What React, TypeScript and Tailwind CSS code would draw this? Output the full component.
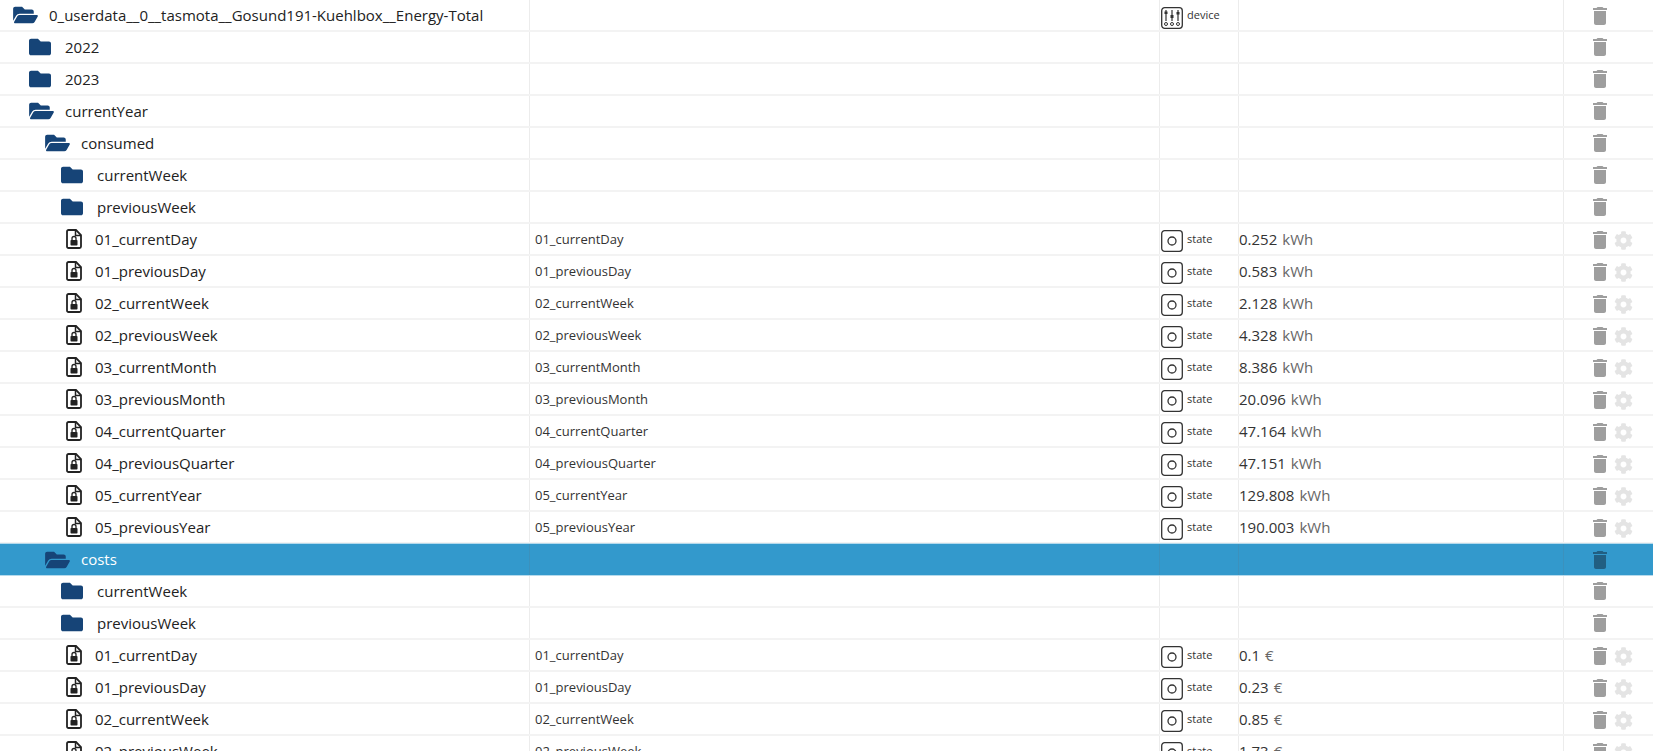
import { FaFolder, FaFolderOpen, FaCog } from 'react-icons/fa';
import { MdDelete } from 'react-icons/md';

type Row = {
	name: string;
	level: number;
	kind: 'open' | 'closed' | 'state';
	type?: 'device' | 'state';
	value?: string;
	unit?: string;
	selected?: boolean;
};

const st = (name: string, value: string, unit: string): Row => ({ name, level: 3, kind: 'state', type: 'state', value, unit });

const rows: Row[] = [
	{ name: '0_userdata__0__tasmota__Gosund191-Kuehlbox__Energy-Total', level: 0, kind: 'open', type: 'device' },
	{ name: '2022', level: 1, kind: 'closed' },
	{ name: '2023', level: 1, kind: 'closed' },
	{ name: 'currentYear', level: 1, kind: 'open' },
	{ name: 'consumed', level: 2, kind: 'open' },
	{ name: 'currentWeek', level: 3, kind: 'closed' },
	{ name: 'previousWeek', level: 3, kind: 'closed' },
	st('01_currentDay', '0.252', 'kWh'),
	st('01_previousDay', '0.583', 'kWh'),
	st('02_currentWeek', '2.128', 'kWh'),
	st('02_previousWeek', '4.328', 'kWh'),
	st('03_currentMonth', '8.386', 'kWh'),
	st('03_previousMonth', '20.096', 'kWh'),
	st('04_currentQuarter', '47.164', 'kWh'),
	st('04_previousQuarter', '47.151', 'kWh'),
	st('05_currentYear', '129.808', 'kWh'),
	st('05_previousYear', '190.003', 'kWh'),
	{ name: 'costs', level: 2, kind: 'open', selected: true },
	{ name: 'currentWeek', level: 3, kind: 'closed' },
	{ name: 'previousWeek', level: 3, kind: 'closed' },
	st('01_currentDay', '0.1', '€'),
	st('01_previousDay', '0.23', '€'),
	st('02_currentWeek', '0.85', '€'),
	st('02_previousWeek', '1.73', '€'),
];

const FileLock = () => (
	<svg viewBox="0 0 16 20" className="w-[16px] h-[20px]">
		<path d="M2.500 1h7.500l5 5v11.500a1.500 1.500 0 0 1-1.500 1.500h-11A1.500 1.500 0 0 1 1 17.500v-15A1.500 1.500 0 0 1 2.500 1z" fill="none" stroke="#222" strokeWidth="1.800" />
		<path d="M9.500 1v5.500h5.500" fill="none" stroke="#222" strokeWidth="1.500" />
		<rect x="4.500" y="11" width="7" height="5.500" rx="0.800" fill="#222" />
		<path d="M6 11V9.500a2 2 0 0 1 4 0V11" fill="none" stroke="#222" strokeWidth="1.300" />
	</svg>
);

const StateIcon = () => (
	<svg viewBox="0 0 22 22" className="w-[22px] h-[22px] mt-[4px] shrink-0">
		<rect x="0.700" y="0.700" width="20.600" height="20.600" rx="3" fill="none" stroke="#333" strokeWidth="1.300" />
		<circle cx="11" cy="11" r="4" fill="none" stroke="#333" strokeWidth="1.300" />
	</svg>
);

const DeviceIcon = () => (
	<svg viewBox="0 0 22 22" className="w-[22px] h-[22px] mt-[5px] shrink-0">
		<rect x="0.700" y="0.700" width="20.600" height="20.600" rx="3" fill="none" stroke="#333" strokeWidth="1.300" />
		<path d="M5 3v11M11 3v11M17 3v11" stroke="#333" strokeWidth="1.200" />
		<rect x="3.500" y="4.500" width="3" height="2.500" fill="#333" />
		<rect x="9.500" y="8" width="3" height="3" fill="#333" />
		<rect x="15.500" y="5" width="3" height="2.500" fill="#333" />
		<circle cx="5" cy="17" r="1.500" fill="none" stroke="#333" />
		<circle cx="11" cy="17" r="1.500" fill="none" stroke="#333" />
		<circle cx="17" cy="17" r="1.500" fill="none" stroke="#333" />
	</svg>
);

const TreeRow = ({ row }: { row: Row }) => {
	const indentClass = ['pl-[13px]', 'pl-[29px]', 'pl-[45px]', 'pl-[61px]'][row.level];
	const stateIndent = row.kind === 'state' ? 'pl-[66px]' : indentClass;
	const line = row.selected ? 'border-r border-[#3b91bd]' : 'border-r border-[#ececec]';
	return (
		<div className={`flex h-[32px] shrink-0 ${row.selected ? 'bg-[#3399cc] border-b border-b-[#b5daec] shadow-[0_-1px_0_#b5daec] text-white' : 'border-b-2 border-b-[#f3f3f3] text-[#222]'}`}>
			<div className={`w-[530px] shrink-0 flex items-center ${line} ${stateIndent}`}>
				{row.kind === 'open' && <FaFolderOpen className="text-[#164477] w-[25px] h-[22px] mr-[11px] shrink-0" />}
				{row.kind === 'closed' && <FaFolder className="text-[#164477] w-[22px] h-[22px] mr-[14px] shrink-0" />}
				{row.kind === 'state' && <span className="w-[29px] shrink-0"><FileLock /></span>}
				<span className="text-[15px] whitespace-nowrap">{row.name}</span>
			</div>
			<div className={`w-[630px] shrink-0 flex items-center pl-[5px] text-[13px] text-[#333] ${line}`}>
				{row.kind === 'state' && <span className="mt-[2px]">{row.name}</span>}
			</div>
			<div className={`w-[79px] shrink-0 flex items-center pl-[1px] gap-[4px] text-[11px] text-[#333] ${line}`}>
				{row.type === 'device' && <DeviceIcon />}
				{row.type === 'state' && <StateIcon />}
				{row.type && <span className="mt-[1px]">{row.type}</span>}
			</div>
			<div className={`w-[325px] shrink-0 flex items-center gap-[5px] text-[15px] ${line}`}>
				{row.value && <span className="text-[#333] mt-[1px]">{row.value}</span>}
				{row.unit && <span className="text-[#666] mt-[1px]">{row.unit}</span>}
			</div>
			<div className={`flex-1 flex items-center pl-[24px] ${row.type ? 'pt-[2px]' : ''}`}>
				<MdDelete className={`w-[24px] h-[24px] shrink-0 ${row.selected ? 'text-[#215f82]' : 'text-[#9e9e9e]'}`} />
				{row.kind === 'state' && <FaCog className="w-[19px] h-[19px] ml-[2px] text-[#e4e4e4]" />}
			</div>
		</div>
	);
};

export default function App() {
	return (
		<div className="h-screen overflow-hidden bg-white flex flex-col font-['Open_Sans','Noto_Sans',sans-serif]">
			{rows.map((row, i) => (
				<TreeRow key={i} row={row} />
			))}
		</div>
	);
}
